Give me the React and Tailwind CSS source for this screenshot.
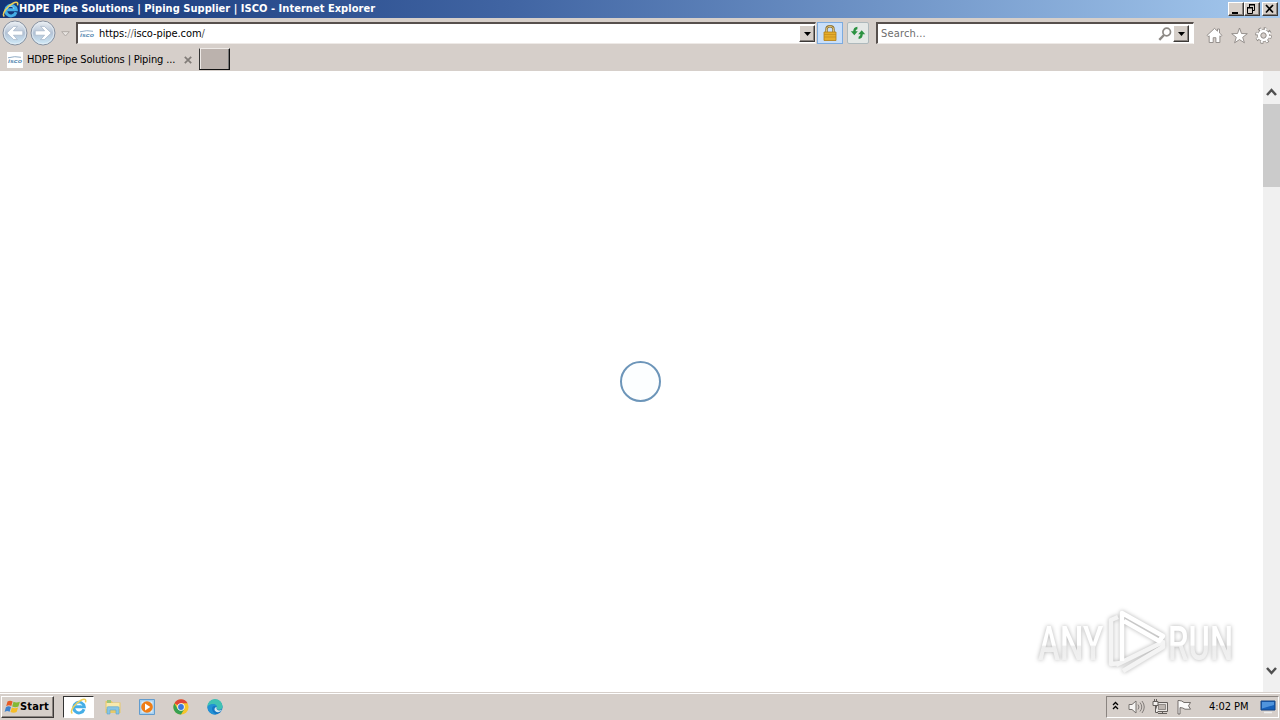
import React from "react";

const bevel =
  "bg-[#d6cfc9] border border-t-white border-l-white border-r-[#3c3937] border-b-[#3c3937] shadow-[inset_-1px_-1px_0_#8a8480]";

const IeLogo = ({ className }) => (
  <svg viewBox="0 0 16 16" className={className}>
    <path
      d="M13.2 10.6A5 5 0 1 1 13.4 8.2H4.2"
      fill="none"
      stroke="#45aee6"
      strokeWidth="2.8"
    />
    <path
      d="M4.6 7.4c1-3.2 5.7-3.4 6.6 0"
      fill="none"
      stroke="#a8e2fa"
      strokeWidth="0.9"
    />
    <path
      d="M2.2 14.6C-.8 12.3 5 4.7 10.4 2.1c3.4-1.6 5.2-.8 4.1 2"
      fill="none"
      stroke="#efcf57"
      strokeWidth="1.4"
    />
  </svg>
);

const SiteIcon = () => (
  <svg viewBox="0 0 16 16" className="size-4 shrink-0 bg-white">
    <path d="M1 5.8q7-2 13-.5" fill="none" stroke="#91acc5" />
    <text
      x="1"
      y="10.5"
      textLength="14"
      lengthAdjust="spacingAndGlyphs"
      fill="#5587b0"
      fontSize="6"
      fontWeight="bold"
      fontStyle="italic"
      fontFamily="Liberation Sans, sans-serif"
    >
      isco
    </text>
  </svg>
);

const NavArrow = ({ flip }) => (
  <svg viewBox="0 0 26 26" className={flip ? "size-[26px] -scale-x-100" : "size-[26px]"}>
    <defs>
      <linearGradient id="orb" x1="0" y1="0" x2="0" y2="1">
        <stop offset="0" stopColor="#eef1f4" />
        <stop offset="0.5" stopColor="#b4c3d6" />
        <stop offset="1" stopColor="#d0ecfa" />
      </linearGradient>
    </defs>
    <circle cx="13" cy="13" r="12" fill="url(#orb)" stroke="#8992a0" />
    <circle cx="13" cy="13" r="10.8" fill="none" stroke="#e6eef4" strokeWidth="0.8" />
    <path
      d="M4.8 13 11.6 6.4h3.8l-4 4.4h9.4v4.4h-9.4l4 4.4h-3.8Z"
      fill="#fff"
      stroke="#a3b3c6"
      strokeWidth="0.7"
    />
  </svg>
);

const DropButton = () => (
  <div className={`flex h-[17px] w-4 items-center justify-center ${bevel}`}>
    <svg viewBox="0 0 7 4" className="h-1 w-[7px]">
      <path d="M0 0h7L3.5 4Z" />
    </svg>
  </div>
);

const TitleBar = () => (
  <div className="flex h-[18px] items-center bg-linear-to-r from-[#133477] from-0% via-[#4165a3] via-40% to-[#a5c9ee] pr-[2px] pl-[2px] text-white">
    <IeLogo className="size-[17px]" />
    <span className="w-[360px] text-[11px] leading-[18px] font-bold tracking-[0.035px] whitespace-pre">
      HDPE Pipe Solutions | Piping Supplier | ISCO - Internet Explorer
    </span>
    <div className="ml-auto flex h-[14px]">
      <div className={`h-[14px] w-4 ${bevel}`}>
        <svg viewBox="0 0 14 12" className="h-3 w-[14px]">
          <path d="M3 9h6v2H3z" />
        </svg>
      </div>
      <div className={`h-[14px] w-4 ${bevel}`}>
        <svg viewBox="0 0 14 12" className="h-3 w-[14px]" fill="none" stroke="#000">
          <path d="M4 2h6M4.5 2v3M4 1.5h6M9.5 2v5.5H8M2 5h6M2.5 5v5.5h5V5M2 4.5h6" />
        </svg>
      </div>
      <div className={`ml-[2px] h-[14px] w-4 ${bevel}`}>
        <svg viewBox="0 0 14 12" className="h-3 w-[14px]" stroke="#000" strokeWidth="1.7">
          <path d="m3 2 7 7.5M10 2 3 9.5" />
        </svg>
      </div>
    </div>
  </div>
);

const AddressRow = () => (
  <div className="flex h-[30px] items-start bg-[#d6cfca]">
    <div className="flex w-[76px] items-center pt-[2px] pl-[2px]">
      <NavArrow />
      <div className="ml-[2px]">
        <NavArrow flip />
      </div>
      <svg viewBox="0 0 9 6" className="mt-[2px] ml-[5px] h-[6px] w-[9px]">
        <path d="M.7.7h7.6L4.5 5Z" fill="#e8e4e1" stroke="#b0aaa6" />
      </svg>
    </div>
    <div className="mt-1 flex h-[22px] w-[740px] items-center border-t-2 border-r border-b border-l-2 border-t-[#57504d] border-r-[#eeeae7] border-b-[#eeeae7] border-l-[#57504d] bg-white pl-[1px]">
      <SiteIcon />
      <span className="ml-1 pt-[2px] text-[11px] tracking-[-0.09px]">
        https:<span className="text-[#777]">//</span>isco-pipe.com<span className="text-[#555]">/</span>
      </span>
      <div className="ml-auto">
        <DropButton />
      </div>
    </div>
    <div className="mt-1 ml-[1px] flex h-[22px] w-[26px] items-center justify-center border border-[#7cabdf] bg-[#c9dffa]">
      <svg viewBox="0 0 14 16" className="h-4 w-[14px]">
        <path d="M3.5 8V4.2C3.5.3 10.5.3 10.5 4.2V8" fill="none" stroke="#8a7033" strokeWidth="2.4" />
        <path d="M3.5 8V4.2C3.5.3 10.5.3 10.5 4.2V8" fill="none" stroke="#e3c67a" strokeWidth="1" />
        <path d="M1 7h12v8.5H1z" fill="#e5ad2c" stroke="#b37d14" strokeWidth="0.8" />
        <path d="M1 9.5h12M1 12h12" stroke="#c18a1b" strokeWidth="0.7" />
      </svg>
    </div>
    <div className="mt-1 ml-1 flex h-[22px] w-[22px] items-center justify-center rounded-xs border border-[#aeb9bc] bg-[#e4e8e6]">
      <svg viewBox="0 0 16 16" className="size-4">
        <path d="M.8 6.2h2.4C3.4 3.6 4.6 2 7.4 1.8v2.4C6.2 4.5 5.7 5 5.6 6.2h2.2L4.3 10.3Z" fill="#2b9241" />
        <path d="M15.2 9.3h-2.4c-.2 2.9-1.4 4.6-4.2 4.8v-2.4c1.2-.3 1.7-1 1.8-2.4H8.2l3.5-4.1Z" fill="#2b9241" />
      </svg>
    </div>
    <div className="mt-1 ml-[7px] flex h-[22px] w-[318px] items-center border-t-2 border-r border-b border-l-2 border-t-[#57504d] border-r-[#fff] border-b-[#eeeae7] border-l-[#57504d] bg-white pr-[4px]">
      <span className="ml-[3px] pt-[2px] text-[11px] tracking-[0.17px] text-[#6d6d6d]">Search...</span>
      <svg viewBox="0 0 14 14" className="mr-[1px] ml-auto size-[14px]" fill="none" stroke="#8d8985">
        <circle cx="8.7" cy="5" r="3.8" strokeWidth="1.7" />
        <path d="m6 8-4.7 4.8" strokeWidth="2.4" />
      </svg>
      <DropButton />
    </div>
    <div className="mt-[9px] ml-[12px] flex gap-[7.5px] text-[#8c8783]">
      <svg viewBox="0 0 17 17" className="size-[17px]">
        <path d="m1 8.4 7.5-7 3 2.8V2h2v4l2.5 2.4-1.1 1.2-1-.8v6.7h-4v-4.8H7.2v4.8h-4V8.8l-1 .8Z" fill="#fff" stroke="currentColor" strokeWidth="0.9" />
      </svg>
      <svg viewBox="0 0 17 17" className="size-[17px]">
        <path d="m8.5 1 2 5.5 5.8.2-4.6 3.6 1.7 5.5-4.9-3.2-4.9 3.2 1.7-5.5L.7 6.7l5.8-.2Z" fill="#fff" stroke="currentColor" strokeWidth="0.9" />
      </svg>
      <svg viewBox="0 0 17 17" className="size-[17px]">
        <circle cx="8.5" cy="8.5" r="6.7" fill="none" stroke="currentColor" strokeWidth="3.2" strokeDasharray="3 2.262" />
        <circle cx="8.5" cy="8.5" r="4.6" fill="none" stroke="currentColor" strokeWidth="3.4" />
        <circle cx="8.5" cy="8.5" r="6.5" fill="none" stroke="#fff" strokeWidth="2.2" strokeDasharray="1.9 3.205" strokeDashoffset="-0.5" />
        <circle cx="8.5" cy="8.5" r="4.3" fill="none" stroke="#fff" strokeWidth="2.8" />
        <circle cx="8.5" cy="8.5" r="2.6" fill="#d6cfca" stroke="currentColor" strokeWidth="0.8" />
      </svg>
    </div>
  </div>
);

const TabRow = () => (
  <div className="flex h-[23px] items-start bg-[#d6cfca]">
    <div className="flex h-[23px] w-[199px] items-center pl-[7px]">
      <SiteIcon />
      <span className="ml-1 w-[150px] pt-[2px] text-[11px] tracking-[-0.12px] whitespace-pre">
        HDPE Pipe Solutions | Piping ...
      </span>
      <svg viewBox="0 0 8 8" className="ml-[7px] size-2">
        <path d="m.8.8 6.4 6.4M7.2.8.8 7.2" stroke="#817c78" strokeWidth="1.7" />
      </svg>
    </div>
    <div className="h-[22px] w-[31px] border border-t-[#eeeae7] border-r-[#111] border-b-[#111] border-l-[#333] bg-[#bbb2ad] shadow-[inset_1px_0_0_#eeeae7,inset_-1px_0_0_#777]"></div>
  </div>
);

const Watermark = () => (
  <svg
    viewBox="0 0 230 84"
    className="absolute top-[529px] left-[1026px] h-[84px] w-[230px] drop-shadow-[0_0_2px_rgba(0,0,0,0.3)]"
  >
    <defs>
      <linearGradient id="fade" x1="0" y1="0" x2="0" y2="1">
        <stop offset="0.52" stopColor="#fff" />
        <stop offset="0.55" stopColor="#ededed" />
        <stop offset="1" stopColor="#f4f4f4" />
      </linearGradient>
    </defs>
    <g fill="url(#fade)" fontFamily="Roboto, sans-serif" fontSize="48" fontWeight="500">
      <text transform="translate(12 60) scale(0.7 1)" textLength="93" lengthAdjust="spacingAndGlyphs">
        ANY
      </text>
      <text transform="translate(142 60) scale(0.7 1)" textLength="93" lengthAdjust="spacingAndGlyphs">
        RUN
      </text>
    </g>
    {/* Play mark made of folded strips */}
    <g fill="none" strokeWidth="4.5" strokeLinejoin="round">
      <path d="M92 17l-7 3v44l10-1M97 71l40-24v-5L90 65" stroke="#f4f4f4" />
      <path d="M96 61V13l41 23-4 5-35-20" stroke="#fff" />
    </g>
  </svg>
);

const Page = () => (
  <div className="relative flex h-[621px] bg-white">
    <div className="flex flex-1 items-center justify-center pl-[17px]">
      <div className="ml-px h-[41px] w-[41px] rounded-full border-2 border-[#6c95b9] bg-[#fcfeff]"></div>
    </div>
    <div className="flex w-[17px] flex-col items-center bg-[#f0f0f0]">
      <svg viewBox="0 0 11 8" className="mt-[17px] h-2 w-[11px]">
        <path d="m1 7 4.5-5L10 7" fill="none" stroke="#505050" strokeWidth="2.5" />
      </svg>
      <div className="mt-[8px] h-[83px] w-[17px] bg-[#cbcbcb]"></div>
      <svg viewBox="0 0 11 8" className="mt-auto mb-[17px] h-2 w-[11px]">
        <path d="M1 1 5.5 6 10 1" fill="none" stroke="#505050" strokeWidth="2.5" />
      </svg>
    </div>
    <Watermark />
  </div>
);

const Taskbar = () => (
  <div className="flex h-7 items-center border-t border-[#d6cfca] bg-[#d6cfca] pl-[1px] shadow-[inset_0_1px_0_#fff]">
    <div className={`flex h-[22px] w-[53px] items-center pl-[2px] ${bevel}`}>
      <svg viewBox="0 0 17 16" className="h-4 w-[17px]">
        <path d="M3.5 2.5Q6 .9 8.6 2.4L7.3 7Q4.7 5.6 2.2 7.2Z" fill="#e65b25" />
        <path d="M9.5 2.8q2.8 1.5 6.4 0l-1.5 4.6q-3 1.5-6.2 0Z" fill="#83b936" />
        <path d="M1.9 8.2q2.6-1.6 5.1-.2l-1.4 4.7q-2.5-1.4-5 .2Z" fill="#3d82ce" />
        <path d="M7.9 8.4q3 1.5 6.2 0l-1.5 4.7q-3 1.5-6.1 0Z" fill="#f6bd27" />
      </svg>
      <span className="-ml-px pt-[2px] text-[11px] font-bold tracking-[0.15px]">Start</span>
    </div>
    <div className="ml-[9px] flex h-[22px] w-[31px] items-center justify-center border border-t-[#333] border-r-white border-b-white border-l-[#333] bg-white">
      <IeLogo className="size-[17px]" />
    </div>
    {/* Explorer */}
    <svg viewBox="0 0 16 16" className="ml-[11px] size-4">
      <path d="M.5 2h6L8 3.5h7.5V14H.5Z" fill="#e8c968" />
      <path d="M2 1h4v3H2z" fill="#9cc47c" />
      <path d="M1.5 4h13v6h-13z" fill="#f8e9ad" />
      <path d="M2 15V8.7q0-1 1-1h10q1 0 1 1V15h-3v-4H5v4Z" fill="#87c5e5" stroke="#5ca4ca" strokeWidth="0.6" />
    </svg>
    {/* Media player */}
    <svg viewBox="0 0 16 16" className="ml-[18px] size-4">
      <path d="M.5.5h15v15H.5z" fill="#a7d0ef" stroke="#629cce" />
      <path d="M2.5 2.5h11v11h-11z" fill="#dceefa" />
      <circle cx="8" cy="8" r="5.8" fill="#ef7d16" />
      <path d="m6 4.5 5.3 3.5L6 11.5Z" fill="#fff" />
    </svg>
    {/* Chrome */}
    <svg viewBox="0 0 16 16" className="ml-[18px] size-4">
      <circle cx="8" cy="8" r="7.6" fill="#f5c52b" />
      <path d="M8 8 1.4 4.2A7.6 7.6 0 0 1 14.6 4.2H8Z" fill="#df4638" />
      <path d="M1.4 4.2A7.6 7.6 0 0 0 8 15.6l3.3-5.7L8 8 4.7 9.9Z" fill="#36a052" />
      <circle cx="8" cy="8" r="3.7" fill="#fff" />
      <circle cx="8" cy="8" r="2.9" fill="#3b78dc" />
    </svg>
    {/* Edge */}
    <svg viewBox="0 0 16 16" className="ml-[18px] size-4">
      <circle cx="8" cy="8" r="7.6" fill="#1677c4" />
      <path d="M.4 8A7.6 7.6 0 0 1 15.6 7.4c0 4-5.6 4.2-6 1.8.9-2.4-1.3-4.2-4-3.8C3.2 5.6 1.2 6.2.4 8Z" fill="#40c2b3" />
      <path d="M.5 8.4C1.4 4 9.7 3.6 9.7 8 6.4 5.5 4.3 8.7 5.3 11.3 6 13.6 8 15 9.5 15.4A7.6 7.6 0 0 1 .5 8.4Z" fill="#2292d5" />
      <path d="M9.6 8c-.9 3.5 2.8 4.4 5.6 2.5-2.7 4.4-7.8 2.7-7.7-.3 0-1 .8-2 2.1-2.2Z" fill="#d6e8ed" />
    </svg>
    <div className="mr-[1px] ml-auto flex h-[22px] w-[173px] items-center border border-t-[#8a8480] border-r-white border-b-white border-l-[#8a8480] pl-[5px]">
      <svg viewBox="0 0 7 9" className="mb-[2px] h-[9px] w-[7px]">
        <path d="m1 4 2.5-2.5L6 4M1 8l2.5-2.5L6 8" fill="none" stroke="#000" strokeWidth="1.3" />
      </svg>
      <svg viewBox="0 0 17 16" className="ml-[9px] h-4 w-[17px]" fill="none" stroke="#77726f">
        <path d="M1 5.5h3L8 2v12l-4-3.5H1Z" fill="#f6f4f2" />
        <path d="M10 5.5q2 2.5 0 5M12 3.5q3.5 4.5 0 9M14 2q4.5 6 0 12" strokeWidth="0.9" />
      </svg>
      <svg viewBox="0 0 17 16" className="ml-[7px] h-4 w-[17px]" fill="none" stroke="#635e5b">
        <path d="M4.5 3.5h11v9h-11z" fill="#e9e5e2" />
        <path d="M6.5 5.5h7v5h-7z" fill="#bdb6b1" strokeWidth="0.6" />
        <path d="M6 14.5h9M10.5 12.5v2" />
        <path d="M1 2.5h5v4H1zM2.5 0v2M4.5 0v2M3.5 6.5v7H6" fill="#f2f0ee" />
      </svg>
      <svg viewBox="0 0 17 16" className="ml-[7px] h-4 w-[17px]">
        <path d="M3 1.5q3 0 5 2h6.5l-2 3.3 2 3.4H9q-2-1.6-5-1.6V15H2V1.5Z" fill="#fbfaf9" stroke="#66615e" strokeWidth="0.9" />
      </svg>
      <span className="ml-[16px] w-[42px] pt-[2px] text-[11px] tracking-[-0.05px] whitespace-pre">4:02 PM</span>
      <svg viewBox="0 0 16 14" className="ml-[9px] h-[14px] w-4">
        <path d="M1 1h14v9H1z" fill="#1660ba" stroke="#174582" />
        <path d="M2 2h12v3L2 8.5Z" fill="#5094dc" />
        <path d="M4 12.5h8" stroke="#eee" strokeWidth="1.5" />
      </svg>
    </div>
  </div>
);

const App = () => {
  return (
    <div className="flex h-[720px] w-[1280px] flex-col overflow-hidden bg-white font-['DejaVu_Sans_Condensed','DejaVu_Sans',sans-serif] text-black">
      <TitleBar />
      <AddressRow />
      <TabRow />
      <Page />
      <Taskbar />
    </div>
  );
};

export default App;
